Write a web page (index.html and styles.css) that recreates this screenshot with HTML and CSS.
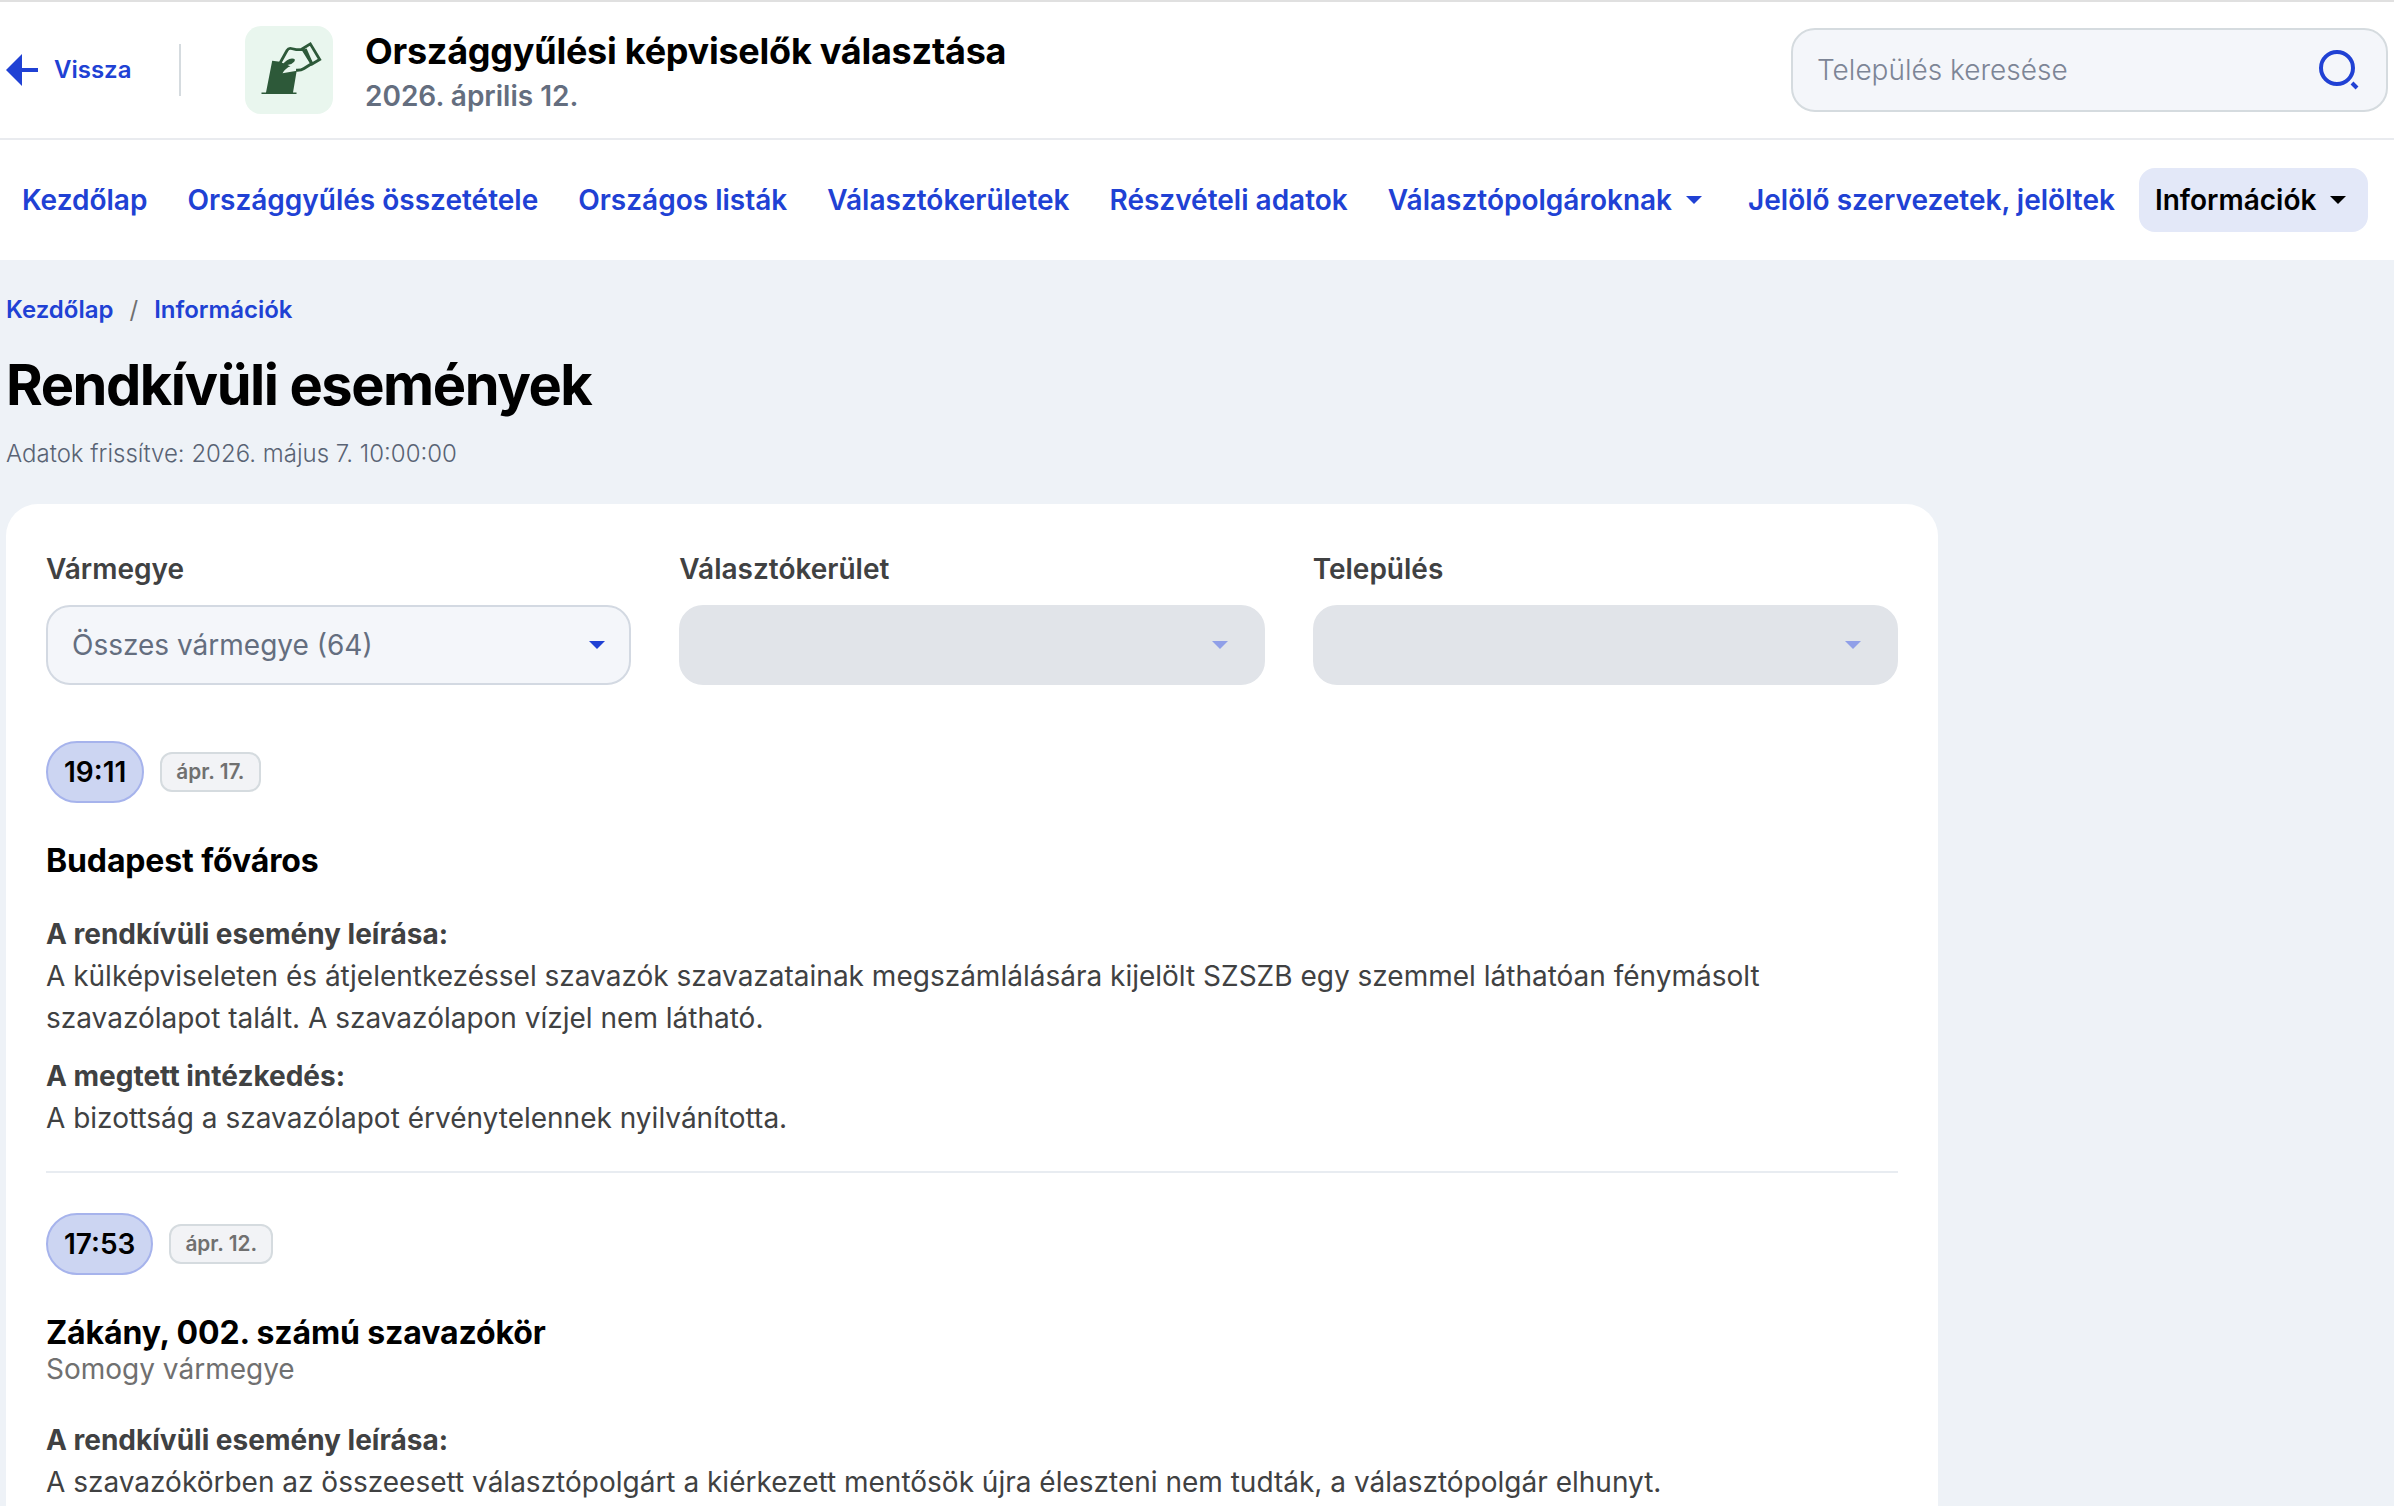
FILE: index.html
```html
<!DOCTYPE html>
<html lang="hu">
<head>
    <meta charset="UTF-8">
    <meta name="viewport" content="width=device-width, initial-scale=1.0">
    <title>Rendkívüli események</title>
    <link rel="stylesheet" href="styles.css">
</head>
<body>
<header class="header">
    <a href="#" class="back">
        <svg width="32" height="32" viewBox="0 0 32 32"><path d="M0 16L16 0v14h16v4H16v14z" fill="currentColor"/></svg>
        <span>Vissza</span>
    </a>
    <div class="divider"></div>
    <div class="logo">
        <svg width="88" height="88" viewBox="0 0 88 88">
            <path d="M27.200 34.700L37 36l15 7L48 66.500h3.500V68H16.500v-1.500H21z" fill="#2d5939"/>
            <path d="M36.500 36.500L43 24.500q1-2 3-1.500l5 1.200 9-.2 7 14-8 5q-4 2.500-8.500 2l-13 2.200q3-5.200 8-7z" fill="#e9f6ee"/>
            <path d="M35.300 36.500L42 24.500q1.500-2.600 4.200-2l5 1.200 8.500-.2M51 44.200q5 .3 8-1.700l7.500-4.800M57.500 22.700l7.800-4.800L74.700 33.500 67 38z" fill="none" stroke="#2d5939" stroke-width="2.800"/>
            <path d="M60.300 23l6.200 14" fill="none" stroke="#2d5939" stroke-width="2.800"/>
            <path d="M37 39q5-6.300 10-6.600 4.300 0 2.200 3.300-2 2.600-6.700 3.300-5.500 3-5 6.500l-3.500-2z" fill="#2d5939"/>
        </svg>
    </div>
    <div class="election">
        <div class="election-title">Országgyűlési képviselők választása</div>
        <div class="election-date">2026. április 12.</div>
    </div>
    <form class="search">
        <input type="text" placeholder="Település keresése">
        <svg width="42" height="42" viewBox="0 0 42 42" fill="none" stroke="currentColor" stroke-width="4">
            <circle cx="19" cy="19" r="16"/>
            <path d="M34 34l5 5"/>
        </svg>
    </form>
</header>

<nav class="nav">
    <a href="#">Kezdőlap</a>
    <a href="#">Országgyűlés összetétele</a>
    <a href="#">Országos listák</a>
    <a href="#">Választókerületek</a>
    <a href="#">Részvételi adatok</a>
    <a href="#" class="dropdown">Választópolgároknak<i class="caret"></i></a>
    <a href="#">Jelölő szervezetek, jelöltek</a>
    <a href="#" class="dropdown active">Információk<i class="caret"></i></a>
</nav>

<main class="main">
    <div class="breadcrumb">
        <a href="#">Kezdőlap</a>
        <span>/</span>
        <a href="#">Információk</a>
    </div>
    <h1>Rendkívüli események</h1>
    <p class="updated">Adatok frissítve: 2026. május 7. 10:00:00</p>

    <section class="card">
        <div class="filters">
            <div class="filter">
                <div class="filter-label">Vármegye</div>
                <div class="select">Összes vármegye (64)<i class="caret"></i></div>
            </div>
            <div class="filter">
                <div class="filter-label">Választókerület</div>
                <div class="select disabled"><i class="caret"></i></div>
            </div>
            <div class="filter">
                <div class="filter-label">Település</div>
                <div class="select disabled"><i class="caret"></i></div>
            </div>
        </div>

        <article class="event">
            <div class="event-time">
                <span class="time">19:11</span>
                <span class="date">ápr. 17.</span>
            </div>
            <h2>Budapest főváros</h2>
            <div class="event-text">
                <b>A rendkívüli esemény leírása:</b>
                <p>A külképviseleten és átjelentkezéssel szavazók szavazatainak megszámlálására kijelölt SZSZB egy szemmel láthatóan fénymásolt szavazólapot talált. A szavazólapon vízjel nem látható.</p>
            </div>
            <div class="event-text">
                <b>A megtett intézkedés:</b>
                <p>A bizottság a szavazólapot érvénytelennek nyilvánította.</p>
            </div>
        </article>

        <article class="event">
            <div class="event-time">
                <span class="time">17:53</span>
                <span class="date">ápr. 12.</span>
            </div>
            <h2>Zákány, 002. számú szavazókör</h2>
            <div class="county">Somogy vármegye</div>
            <div class="event-text">
                <b>A rendkívüli esemény leírása:</b>
                <p>A szavazókörben az összeesett választópolgárt a kiérkezett mentősök újra éleszteni nem tudták, a választópolgár elhunyt.</p>
            </div>
        </article>
    </section>
</main>
</body>
</html>
```

FILE: styles.css
```css
* {
    margin: 0;
    padding: 0;
    box-sizing: border-box;
}

body {
    display: flex;
    flex-direction: column;
    min-height: 100vh;
    background: #eef2f7;
    color: #404142;
    font-family: Inter, "Liberation Sans", sans-serif;
    font-size: 28px;
    line-height: 42px;
    border-top: 2px solid #e0e0e0;
}

a {
    color: #2041d4;
    font-weight: 600;
    text-decoration: none;
}

/* header */
.header {
    display: flex;
    align-items: center;
    height: 138px;
    padding: 0 6px;
    background: #fff;
    border-bottom: 2px solid #e9ebef;
}

.back {
    display: flex;
    align-items: center;
    gap: 16px;
    width: 173px;
    font-size: 24px;
}

.divider {
    width: 2px;
    height: 52px;
    background: #d5dbdf;
}

.logo {
    width: 88px;
    height: 88px;
    margin-left: 64px;
    border-radius: 16px;
    background: #e9f6ee;
}

.logo svg {
    display: block;
}

.election {
    margin-left: 32px;
    padding-top: 7px;
}

.election-title {
    font-size: 36px;
    line-height: 44px;
    font-weight: 700;
    letter-spacing: -0.25px;
    color: #000;
}

.election-date {
    line-height: 46px;
    font-weight: 600;
    color: #646e7f;
}

.search {
    display: flex;
    align-items: center;
    width: 597px;
    height: 84px;
    margin-left: auto;
    padding: 0 26px 0 24px;
    border: 2px solid #d5dbdf;
    border-radius: 24px;
    background: #f4f6fa;
    color: #2041d4;
}

.search input {
    flex: 1;
    border: none;
    outline: none;
    background: transparent;
    font: inherit;
    font-weight: 300;
}

.search input::placeholder {
    color: #7d8596;
}

/* nav */
.nav {
    display: flex;
    align-items: center;
    gap: 8px;
    height: 120px;
    padding: 0 6px;
    background: #fff;
}

.nav a {
    display: flex;
    align-items: center;
    height: 64px;
    padding: 0 16px;
    border-radius: 16px;
    white-space: nowrap;
}

.nav .dropdown {
    gap: 14px;
    padding-right: 22px;
}

.nav .active {
    background: #e3e8f8;
    color: #000;
}

.caret {
    border: 8px solid transparent;
    border-top-color: currentColor;
    border-bottom: none;
}

/* content */
.main {
    display: flex;
    flex: 1;
    flex-direction: column;
    padding: 29px 6px 0;
}

.breadcrumb {
    display: flex;
    gap: 16px;
    font-size: 24px;
    color: #707070;
}

h1 {
    margin-top: 19px;
    font-size: 56px;
    line-height: 70px;
    font-weight: 700;
    letter-spacing: -1.45px;
    color: #000;
}

.updated {
    margin-top: 16px;
    font-size: 24px;
    line-height: 36px;
    font-weight: 300;
    color: #596374;
}

.card {
    flex: 1;
    width: 1932px;
    margin-top: 32px;
    padding: 40px 40px 0;
    border-radius: 32px 32px 0 0;
    background: #fff;
}

.filters {
    display: grid;
    grid-template-columns: repeat(3, 1fr);
    gap: 48px;
}

.filter-label {
    margin: 4px 0 15px;
    font-weight: 600;
}

.select {
    display: flex;
    align-items: center;
    justify-content: space-between;
    height: 80px;
    padding: 0 24px;
    border: 2px solid #d3d9e2;
    border-radius: 24px;
    background: #f4f6fa;
    color: #646e7f;
}

.select .caret {
    color: #2041d4;
}

.select.disabled {
    justify-content: flex-end;
    padding-right: 35px;
    border-color: #e1e4e9;
    background: #e1e4e9;
}

.disabled .caret {
    color: #909fe8;
}

.event {
    margin-top: 56px;
    padding-bottom: 32px;
    border-bottom: 2px solid #e8ecf1;
}

.event + .event {
    margin-top: 40px;
}

.event:last-child {
    padding-bottom: 0;
    border-bottom: none;
}

.event-time {
    display: flex;
    align-items: center;
    gap: 16px;
}

.time {
    height: 62px;
    padding: 0 16px;
    border: 2px solid #a6b3ec;
    border-radius: 31px;
    background: #ccd5f2;
    color: #000;
    font-weight: 600;
    line-height: 58px;
}

.date {
    height: 40px;
    padding: 0 14px;
    border: 2px solid #d5dbdf;
    border-radius: 12px;
    background: #f2f3f6;
    color: #707070;
    font-size: 20.8px;
    font-weight: 600;
    line-height: 36px;
}

h2 {
    margin-top: 38px;
    font-size: 32px;
    line-height: 40px;
    font-weight: 700;
    letter-spacing: -0.13px;
    color: #000;
}

.county {
    line-height: 32px;
    color: #707070;
}

.event-text {
    margin-top: 16px;
}

h2 + .event-text {
    margin-top: 32px;
}

.county + .event-text {
    margin-top: 34px;
}
```
